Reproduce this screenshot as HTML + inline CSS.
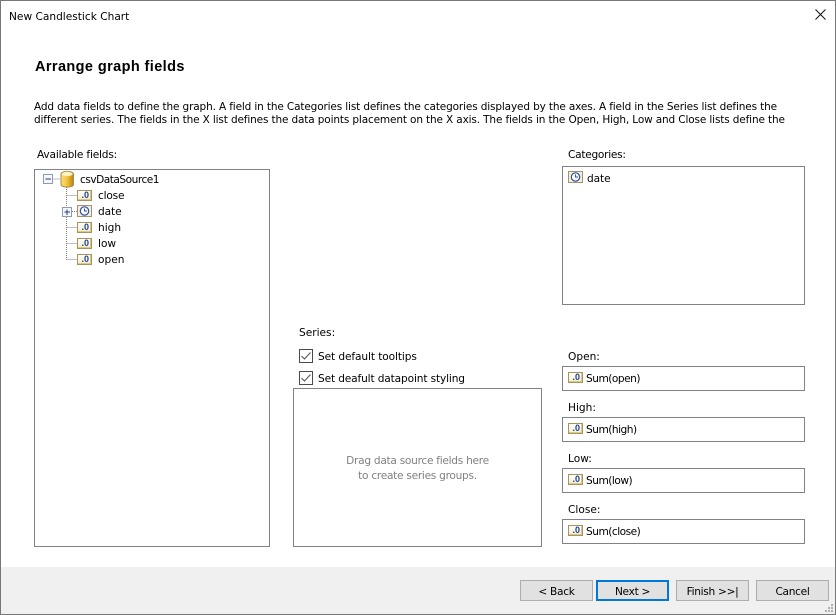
<!DOCTYPE html>
<html><head><meta charset="utf-8">
<style>
html,body{margin:0;padding:0;background:#fff}
#w{position:relative;width:836px;height:615px;overflow:hidden;background:#fff;font-family:"DejaVu Sans","Liberation Sans",sans-serif;font-size:10.6px;color:#000}
.t{position:absolute;white-space:nowrap;line-height:14px}
.s{letter-spacing:-.5px}
.b{position:absolute;box-sizing:border-box;border:1px solid #7f8288;background:#fff}
.btn{position:absolute;box-sizing:border-box;width:73px;height:21px;top:580px;border:1px solid #adadad;background:#e1e1e1;text-align:center;line-height:20px;padding-top:1px;letter-spacing:-.3px}
.n{position:absolute;box-sizing:border-box;width:15px;height:11px;border:1px solid #a8945a;background:linear-gradient(#fff,#f3ecd2);font:bold 9px/9px "Liberation Sans",sans-serif;color:#1a3f8f;text-align:right;padding-right:2px;box-shadow:inset -1px -1px 0 #d9c98a}
svg{position:absolute;overflow:visible}
</style></head><body>
<div id="w">
<div style="position:absolute;left:0;top:567px;width:836px;height:48px;background:#f0f0f0"></div>
<div style="position:absolute;left:0;top:0;width:836px;height:615px;box-sizing:border-box;border:1px solid #777"></div>

<div class="t" style="left:9px;top:10px">New Candlestick Chart</div>
<svg style="left:815px;top:9px" width="11" height="11"><path d="M0.5 0.5L10.5 10.5M10.5 0.5L0.5 10.5" stroke="#111" stroke-width="1" fill="none"/></svg>

<div class="t" style="left:35px;top:58px;font-size:14.5px;line-height:18px;font-weight:bold;font-family:'Liberation Sans',sans-serif;letter-spacing:.4px">Arrange graph fields</div>
<div class="t" style="left:34px;top:100px;font-size:10.5px;letter-spacing:-.14px">Add data fields to define the graph. A field in the Categories list defines the categories displayed by the axes. A field in the Series list defines the</div>
<div class="t" style="left:34px;top:113px;font-size:10.5px;letter-spacing:-.14px">different series. The fields in the X list defines the data points placement on the X axis. The fields in the Open, High, Low and Close lists define the</div>

<div class="t" style="left:37px;top:148px;letter-spacing:-.19px">Available fields:</div>
<div class="b" style="left:34px;top:169px;width:236px;height:378px"></div>

<svg style="left:0;top:0" width="836" height="615">
<g stroke="#808080" stroke-width="1" stroke-dasharray="1 1" fill="none" shape-rendering="crispEdges">
<path d="M53.5 179H60M66.5 187V259.5M66.5 195.5H77M72 211.5H77M66.5 227.5H77M66.5 243.5H77M66.5 259.5H77"/>
</g>
<rect x="43.5" y="174.5" width="9" height="9" fill="#f4f6fa" stroke="#8e9bb3" shape-rendering="crispEdges"/>
<path d="M45.5 179H51" stroke="#2a3f75" shape-rendering="crispEdges"/>
<rect x="62.5" y="207.5" width="9" height="9" fill="#f4f6fa" stroke="#8e9bb3" shape-rendering="crispEdges"/>
<path d="M64.5 212H70M67 209.5V215" stroke="#2a3f75" shape-rendering="crispEdges"/>
<defs><linearGradient id="g" x1="0" x2="1" y1="0" y2="0"><stop offset="0" stop-color="#f8dc88"/><stop offset=".45" stop-color="#f6c63c"/><stop offset="1" stop-color="#b5841a"/></linearGradient></defs>
<path d="M61 174C61 170.5 73.5 170.5 73.5 174V184.5C73.5 188 61 188 61 184.5Z" fill="url(#g)" stroke="#a98a45"/>
<ellipse cx="67.2" cy="174" rx="5.5" ry="2.2" fill="#fdf2c4"/>
</svg>
<div class="t s" style="left:80px;top:173px">csvDataSource1</div>

<div class="n" style="left:77px;top:190px">.0</div><div class="t" style="left:98px;top:189px;letter-spacing:-.2px">close</div>
<div class="t" style="left:98px;top:205px;letter-spacing:-.1px">date</div>
<div class="n" style="left:77px;top:222px">.0</div><div class="t" style="left:98px;top:221px">high</div>
<div class="n" style="left:77px;top:238px">.0</div><div class="t" style="left:98px;top:237px">low</div>
<div class="n" style="left:77px;top:254px">.0</div><div class="t" style="left:98px;top:253px">open</div>
<svg style="left:77px;top:205px" width="15" height="12"><rect x=".5" y=".5" width="14" height="11" fill="#f4efe0" stroke="#a39467"/><circle cx="7.5" cy="6" r="4.2" fill="#fff" stroke="#2f4fa8" stroke-width="1.2"/><path d="M7.5 3.5V6H10" stroke="#2f4fa8" fill="none"/></svg>

<div class="t" style="left:568px;top:148px;letter-spacing:-.27px">Categories:</div>
<div class="b" style="left:562px;top:166px;width:243px;height:139px"></div>
<svg style="left:568px;top:171px" width="15" height="12"><rect x=".5" y=".5" width="14" height="11" fill="#f4efe0" stroke="#a39467"/><circle cx="7.5" cy="6" r="4.2" fill="#fff" stroke="#2f4fa8" stroke-width="1.2"/><path d="M7.5 3.5V6H10" stroke="#2f4fa8" fill="none"/></svg>
<div class="t" style="left:587px;top:172px;letter-spacing:-.1px">date</div>

<div class="t" style="left:299px;top:326px">Series:</div>
<svg style="left:299px;top:349px" width="14" height="36">
<rect x=".5" y=".5" width="13" height="13" fill="#fff" stroke="#4a4a4a" shape-rendering="crispEdges"/>
<path d="M2.5 7L5.5 10L11.5 3.5" stroke="#555" stroke-width="1.1" fill="none"/>
<rect x=".5" y="22.5" width="13" height="13" fill="#fff" stroke="#4a4a4a" shape-rendering="crispEdges"/>
<path d="M2.5 29L5.5 32L11.5 25.5" stroke="#555" stroke-width="1.1" fill="none"/>
</svg>
<div class="t" style="left:318px;top:350px;letter-spacing:-.1px">Set default tooltips</div>
<div class="t" style="left:318px;top:372px;letter-spacing:-.14px">Set deafult datapoint styling</div>
<div class="b" style="left:293px;top:388px;width:249px;height:159px"></div>
<div class="t" style="left:294px;top:454px;width:247px;text-align:center;color:#808080;line-height:15px;white-space:normal;letter-spacing:-.28px">Drag data source fields here<br>to create series groups.</div>

<div class="t" style="left:568px;top:350px">Open:</div>
<div class="b" style="left:562px;top:366px;width:243px;height:25px"></div>
<div class="n" style="left:568px;top:372px">.0</div><div class="t s" style="left:586px;top:372px">Sum(open)</div>
<div class="t" style="left:568px;top:401px">High:</div>
<div class="b" style="left:562px;top:417px;width:243px;height:25px"></div>
<div class="n" style="left:568px;top:423px">.0</div><div class="t s" style="left:586px;top:423px">Sum(high)</div>
<div class="t" style="left:568px;top:452px">Low:</div>
<div class="b" style="left:562px;top:468px;width:243px;height:25px"></div>
<div class="n" style="left:568px;top:474px">.0</div><div class="t s" style="left:586px;top:474px">Sum(low)</div>
<div class="t" style="left:568px;top:503px">Close:</div>
<div class="b" style="left:562px;top:519px;width:243px;height:25px"></div>
<div class="n" style="left:568px;top:525px">.0</div><div class="t s" style="left:586px;top:525px">Sum(close)</div>

<div class="btn" style="left:520px">&lt; Back</div>
<div class="btn" style="left:596px;border:2px solid #0078d7;line-height:18px">Next &gt;</div>
<div class="btn" style="left:676px">Finish &gt;&gt;|</div>
<div class="btn" style="left:756px">Cancel</div>
<svg style="left:824px;top:603px" width="11" height="11" fill="#b0b0b0" shape-rendering="crispEdges"><rect x="7" y="1" width="2" height="2"/><rect x="4" y="4" width="2" height="2"/><rect x="7" y="4" width="2" height="2"/><rect x="1" y="7" width="2" height="2"/><rect x="4" y="7" width="2" height="2"/><rect x="7" y="7" width="2" height="2"/></svg>
</div>
</body></html>
